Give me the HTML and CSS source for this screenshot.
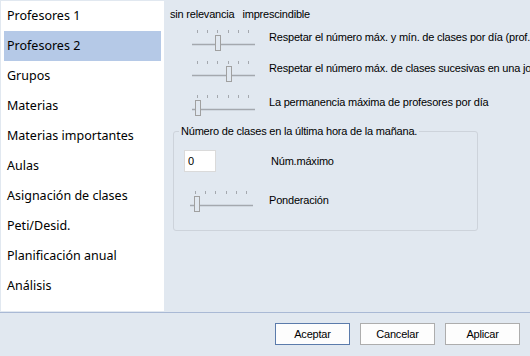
FILE: index.html
```html
<!DOCTYPE html>
<html>
<head>
    <title>Opciones</title>
    <link rel="stylesheet" href="styles.css">
</head>
<body>
    <div class="main">
        <ul class="menu">
            <li>Profesores 1</li>
            <li class="selected">Profesores 2</li>
            <li>Grupos</li>
            <li>Materias</li>
            <li>Materias importantes</li>
            <li>Aulas</li>
            <li>Asignación de clases</li>
            <li>Peti/Desid.</li>
            <li>Planificación anual</li>
            <li>Análisis</li>
        </ul>

        <div class="content">
            <div class="scale">
                <span>sin relevancia</span>
                <span>imprescindible</span>
            </div>

            <div class="row row1">
                <svg class="slider" width="68" height="22" viewBox="0 0 68 22">
                    <g class="ticks"><line x1="7.5" y1="1" x2="7.5" y2="4"/><line x1="17.5" y1="1" x2="17.5" y2="4"/><line x1="27.5" y1="1" x2="27.5" y2="4"/><line x1="38.5" y1="1" x2="38.5" y2="4"/><line x1="48.5" y1="1" x2="48.5" y2="4"/><line x1="58.5" y1="1" x2="58.5" y2="4"/></g>
                    <line class="track" x1="2" y1="15.5" x2="65" y2="15.5"/>
                    <rect class="thumb" x="25.5" y="6.5" width="5" height="15"/>
                </svg>
                <span class="label">Respetar el número máx. y mín. de clases por día (prof.</span>
            </div>

            <div class="row row2">
                <svg class="slider" width="68" height="22" viewBox="0 0 68 22">
                    <g class="ticks"><line x1="7.5" y1="1" x2="7.5" y2="4"/><line x1="17.5" y1="1" x2="17.5" y2="4"/><line x1="27.5" y1="1" x2="27.5" y2="4"/><line x1="38.5" y1="1" x2="38.5" y2="4"/><line x1="48.5" y1="1" x2="48.5" y2="4"/><line x1="58.5" y1="1" x2="58.5" y2="4"/></g>
                    <line class="track" x1="2" y1="15.5" x2="65" y2="15.5"/>
                    <rect class="thumb" x="36.5" y="6.5" width="5" height="15"/>
                </svg>
                <span class="label">Respetar el número máx. de clases sucesivas en una jornada</span>
            </div>

            <div class="row row3">
                <svg class="slider" width="68" height="22" viewBox="0 0 68 22">
                    <g class="ticks"><line x1="7.5" y1="1" x2="7.5" y2="4"/><line x1="17.5" y1="1" x2="17.5" y2="4"/><line x1="27.5" y1="1" x2="27.5" y2="4"/><line x1="38.5" y1="1" x2="38.5" y2="4"/><line x1="48.5" y1="1" x2="48.5" y2="4"/><line x1="58.5" y1="1" x2="58.5" y2="4"/></g>
                    <line class="track" x1="2" y1="15.5" x2="65" y2="15.5"/>
                    <rect class="thumb" x="5.5" y="6.5" width="5" height="15"/>
                </svg>
                <span class="label">La permanencia máxima de profesores por día</span>
            </div>

            <fieldset class="group">
                <legend>Número de clases en la última hora de la mañana.</legend>
                <div class="row">
                    <input class="num" type="text" value="0">
                    <span class="label">Núm.máximo</span>
                </div>
                <div class="row row-pond">
                    <svg class="slider" width="68" height="22" viewBox="0 0 68 22">
                        <g class="ticks"><line x1="7.5" y1="1" x2="7.5" y2="4"/><line x1="17.5" y1="1" x2="17.5" y2="4"/><line x1="27.5" y1="1" x2="27.5" y2="4"/><line x1="38.5" y1="1" x2="38.5" y2="4"/><line x1="48.5" y1="1" x2="48.5" y2="4"/><line x1="58.5" y1="1" x2="58.5" y2="4"/></g>
                        <line class="track" x1="2" y1="15.5" x2="65" y2="15.5"/>
                        <rect class="thumb" x="6.5" y="6.5" width="5" height="15"/>
                    </svg>
                    <span class="label">Ponderación</span>
                </div>
            </fieldset>
        </div>
    </div>

    <div class="footer">
        <button class="btn default">Aceptar</button>
        <button class="btn">Cancelar</button>
        <button class="btn">Aplicar</button>
    </div>
</body>
</html>
```

FILE: styles.css
```css
body {
    margin: 0;
    width: 530px;
    height: 356px;
    overflow: hidden;
    background-color: #e1e8f0;
    font-family: "Liberation Sans", Arial, sans-serif;
    font-size: 11px;
    letter-spacing: -0.2px;
    color: #000;
}

.main {
    display: flex;
    height: 312px;
    border-bottom: 1px solid #a9b9d5;
}

/* left list */
.menu {
    list-style: none;
    margin: 1px 0 0 1px;
    padding: 0 3px;
    width: 157px;
    height: 310px;
    background-color: #fff;
    font-family: "Noto Sans", sans-serif;
    font-size: 12.5px;
    letter-spacing: 0;
}

.menu li {
    height: 30px;
    line-height: 30px;
    padding-left: 3px;
    white-space: nowrap;
}

.menu li.selected {
    background-color: #b5c9e7;
}

/* right side */
.content {
    flex: 1;
    padding-left: 6px;
    white-space: nowrap;
    overflow: hidden;
}

.scale {
    display: flex;
    gap: 8px;
    margin-top: 7px;
    height: 14px;
    line-height: 14px;
}

.row {
    display: flex;
    align-items: flex-start;
}

.row1 { margin-top: 8px; }
.row2 { margin-top: 9px; }
.row3 { margin-top: 12px; }

.slider {
    display: block;
    margin-left: 20px;
    flex-shrink: 0;
}

.ticks line {
    stroke: #a4a8ae;
    stroke-width: 1;
}

.track {
    stroke: #a4a8ae;
    stroke-width: 1.5;
}

.thumb {
    fill: #e1e8f0;
    stroke: #a0a0a0;
    stroke-width: 1;
}

.label {
    margin-left: 11px;
    margin-top: 1px;
    line-height: 14px;
}

.group {
    margin: 8px 0 0 3px;
    padding: 12px 0 0 0;
    width: 303px;
    height: 93px;
    border: 1px solid #cdd3db;
    border-radius: 3px;
}

.group legend {
    margin-left: 5px;
    padding: 0 2px;
    line-height: 14px;
}

.num {
    width: 32px;
    height: 22px;
    box-sizing: border-box;
    margin-left: 10px;
    border: 1px solid #dadada;
    padding: 0 0 0 3px;
    font-family: inherit;
    font-size: 11px;
    background-color: #fff;
}

.group .label {
    margin-left: 55px;
    margin-top: 4px;
}

.row-pond {
    margin-top: 18px;
}

.row-pond .slider {
    margin-left: 14px;
}

.row-pond .label {
    margin-left: 13px;
    margin-top: 3px;
}

/* bottom buttons */
.footer {
    display: flex;
    justify-content: flex-end;
    gap: 10px;
    padding: 10px 10px 0 0;
}

.btn {
    width: 75px;
    height: 22px;
    background-color: #fdfdfd;
    border: 1px solid #adadad;
    font-family: "Liberation Sans", Arial, sans-serif;
    font-size: 11px;
    letter-spacing: -0.2px;
    padding: 0;
    color: #000;
}

.btn.default {
    border-color: #5b7bab;
}
```
